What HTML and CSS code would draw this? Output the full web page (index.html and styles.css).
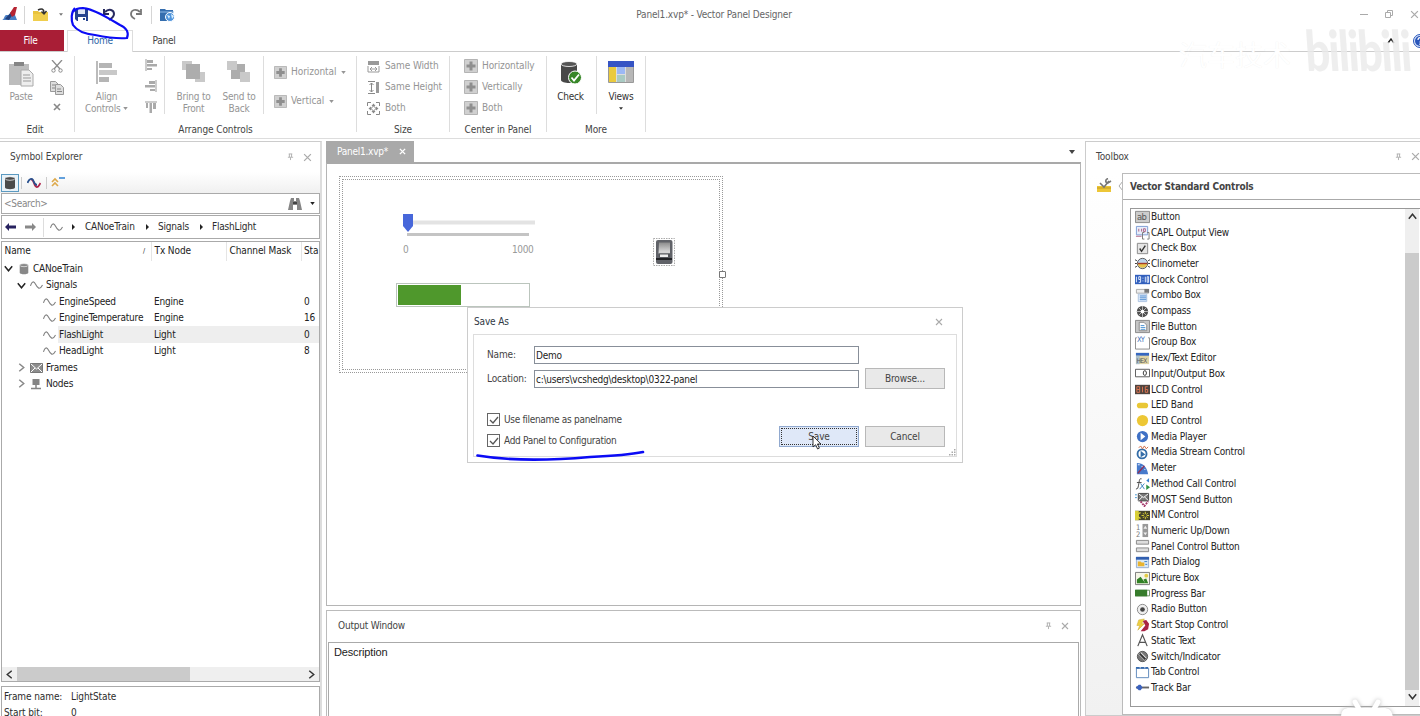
FILE: index.html
```html
<!DOCTYPE html>
<html lang="en">
<head>
<meta charset="utf-8">
<title>Panel1.xvp* - Vector Panel Designer</title>
<link rel="stylesheet" href="styles.css">
</head>
<body>
<svg class="defs" aria-hidden="true">
  <symbol id="wave" viewBox="0 0 14 10"><path d="M.5 6C2 1 4 .2 6 4.200S10.500 11 13.500 5" fill="none" stroke="#808080" stroke-width="1.200"/></symbol>
  <symbol id="db" viewBox="0 0 12 14"><path d="M1 2.500v9c0 2.300 10 2.300 10 0v-9z" fill="currentColor"/><ellipse cx="6" cy="2.500" rx="5" ry="1.800" fill="currentColor" stroke="#fff" stroke-width=".7"/></symbol>
  <symbol id="pin" viewBox="0 0 8 8"><path d="M2 .5h4M2.700.5v3.500M5.200.5v3.500M1 4.300h6M4 4.500v3" fill="none" stroke="#aaa" stroke-width="1"/></symbol>
  <symbol id="x" viewBox="0 0 8 8"><path d="M1 1l6 6M7 1l-6 6" fill="none" stroke="currentColor" stroke-width="1.100"/></symbol>
  <symbol id="down" viewBox="0 0 8 8"><path d="M.7 2l3.300 4 3.300-4" fill="none" stroke="currentColor" stroke-width="1.300"/></symbol>
  <symbol id="tri" viewBox="0 0 6 4"><path d="M0 0h6L3 4z" fill="currentColor"/></symbol>
  <symbol id="plusbox" viewBox="0 0 14 14"><path d="M.5.5h13v13H.5z" fill="#d0d0d0" stroke="#b4b4b4"/><path d="M7 2.500v9M2.500 7h9" stroke="#8f8f8f" stroke-width="3"/></symbol>
  <symbol id="aleft" viewBox="0 0 12 12"><path d="M1 0v12" stroke="#999"/><path d="M2 1h6v3H2zM2 5h10v2.500H2zM2 9h5v2H2z" fill="#aaa"/></symbol>
</svg>
<div class="app">
  <header class="titlebar">
    <div class="quick">
      <svg class="q1" width="16" height="15" viewBox="0 0 16 15"><path d="M0 13c2 0 2-4 4-5h9l2 5z" fill="#4a7fc4"/><path d="M3 12l6-7 2 2-4 6z" fill="#203f7c"/><path d="M8 6l4-6h3l-2 8-3 2z" fill="#b62432"/></svg>
      <i class="vsep"></i>
      <svg class="q2" width="16" height="14" viewBox="0 0 16 14"><path d="M0 3h5l1 1h9v9H0z" fill="#e9c33e"/><path d="M0 6h10l2-2h3v9H0z" fill="#f0ce4d"/><path d="M5 2c4-2 6-1 6 3M8.500 3.500L11 6l2.500-3" fill="none" stroke="#333" stroke-width="1.500"/></svg>
      <svg class="q3" width="4" height="3"><use href="#tri"/></svg>
      <svg class="q4" width="14" height="14" viewBox="0 0 14 14"><path d="M0 1h13v12H2l-2-2z" fill="#25438f"/><path d="M3 1h7v5H3z" fill="#dfe6f5"/><path d="M3 9h8v4H3z" fill="#fff"/><path d="M8 10h2v2H8z" fill="#25438f"/></svg>
      <svg class="q5" width="13" height="13" viewBox="0 0 13 13"><path d="M2 4C6 0 11 2 11 6c0 3-2 4-5 6M1 1v5h5" fill="none" stroke="#282b60" stroke-width="2"/></svg>
      <svg class="q6" width="12" height="13" viewBox="0 0 12 13"><path d="M10 4C6 0 1 2 1 6c0 3 2 4 4 5M11 1v5H6" fill="none" stroke="#777" stroke-width="1.800"/></svg>
      <i class="vsep"></i>
      <svg class="q7" width="15" height="14" viewBox="0 0 15 14"><path d="M0 1h5l1 1h7v11H0z" fill="#346dae"/><path d="M0 4h14" stroke="#8fbbe6"/><circle cx="10" cy="9" r="4.500" fill="#4f94dc" stroke="#fff"/><path d="M7 7l3 1-1 3M11 6l3 2-2 3" fill="#d9efff"/></svg>
    </div>
    <div class="apptitle">Panel1.xvp* - Vector Panel Designer</div>
    <div class="winbtns">
      <svg width="8" height="8" viewBox="0 0 8 8"><path d="M0 4.500h8" stroke="#aaa"/></svg>
      <svg width="8" height="8" viewBox="0 0 8 8"><path d="M.5 2.500h5v5h-5zM2.500 2V.5h5v5H6" fill="none" stroke="#aaa"/></svg>
      <svg class="gray" width="9" height="9"><use href="#x"/></svg>
    </div>
  </header>
  <nav class="tabs">
    <span class="tab file">File</span><span class="tab home">Home</span><span class="tab plain">Panel</span>
    <span class="help"><svg width="8" height="6" viewBox="0 0 8 6"><path d="M1 5l3-4 3 4" fill="none" stroke="#222" stroke-width="1.400"/></svg><svg width="14" height="14" viewBox="0 0 14 14"><circle cx="7" cy="7" r="6.500" fill="#dbe6fa" stroke="#2855ba"/><circle cx="7" cy="7" r="5" fill="#2855ba"/><path d="M5 6c0-3 4-3 4-.5C9 7 7 7 7 8.500M7 9.500V11" fill="none" stroke="#fff" stroke-width="1.200"/></svg></span>
  </nav>
  <section class="ribbon">
    <div class="group edit">
      <div class="body">
        <div class="big paste"><svg width="26" height="26" viewBox="0 0 26 26"><path d="M0 3h20v21H0z" fill="#bdbdbd"/><path d="M5 1h10v4H5z" fill="#858585"/><path d="M12 9h8l4 4v12H12z" fill="#eee" stroke="#aaa"/><path d="M14 14h7M14 17h8M14 20h8" stroke="#999"/></svg><span>Paste</span></div>
        <div class="stack">
          <svg width="12" height="13" viewBox="0 0 12 13"><path d="M1 0l8 9M11 0L3 9" stroke="#8c8c8c" stroke-width="1.300"/><circle cx="2.500" cy="10.500" r="1.700" fill="none" stroke="#8c8c8c"/><circle cx="9.500" cy="10.500" r="1.700" fill="none" stroke="#8c8c8c"/></svg>
          <svg width="14" height="14" viewBox="0 0 14 14"><path d="M.5.5h5l3 3v7h-8z" fill="#ddd" stroke="#999"/><path d="M5.500 3.500h5l3 3v7h-8z" fill="#ddd" stroke="#999"/><path d="M2 4h3M2 7h3M7 8h4M7 10.500h5" stroke="#888"/></svg>
          <svg width="8" height="8" viewBox="0 0 8 8"><path d="M1 1l6 6M7 1L1 7" stroke="#888" stroke-width="1.600"/></svg>
        </div>
      </div><div class="label">Edit</div>
    </div>
    <div class="group arrange">
      <div class="body">
        <div class="big align"><svg width="22" height="24" viewBox="0 0 22 24"><path d="M1 0v23" stroke="#a5a5a5" stroke-width="1.500"/><path d="M3 2h13v5H3zM3 16h10v5H3z" fill="#b5b5b5"/><path d="M3 9h18v5H3z" fill="#c8c8c8"/></svg><span>Align<br>Controls <svg class="mid" width="5" height="3"><use href="#tri"/></svg></span></div>
        <div class="stack">
          <svg width="12" height="12"><use href="#aleft"/></svg>
          <svg class="flip" width="12" height="12"><use href="#aleft"/></svg>
          <svg class="turn" width="12" height="12"><use href="#aleft"/></svg>
        </div>
        <i class="rule"></i>
        <div class="big bring"><svg width="24" height="22" viewBox="0 0 24 22"><path d="M0 0h10v9H0zM13 11h10v10H13z" fill="#c9c9c9"/><path d="M4 3h14v15H4z" fill="#adadad"/></svg><span>Bring to<br>Front</span></div>
        <div class="big send"><svg width="24" height="22" viewBox="0 0 24 22"><path d="M4 3h14v15H4z" fill="#adadad"/><path d="M0 0h10v9H0zM13 11h10v10H13z" fill="#c9c9c9"/></svg><span>Send to<br>Back</span></div>
        <i class="rule"></i>
        <div class="two"><div><svg width="13" height="13"><use href="#plusbox"/></svg>Horizontal <svg width="5" height="3"><use href="#tri"/></svg></div><div><svg width="13" height="13"><use href="#plusbox"/></svg>Vertical <svg width="5" height="3"><use href="#tri"/></svg></div></div>
      </div><div class="label">Arrange Controls</div>
    </div>
    <div class="group size">
      <div class="body three">
        <div><svg width="13" height="13" viewBox="0 0 13 13"><path d="M1 1h11v4H1z" fill="#999"/><path d="M1 6v6h11V6M3 9h7M5 7L3 9l2 2M8 7l2 2-2 2" fill="none" stroke="#999"/></svg>Same Width</div>
        <div><svg width="13" height="13" viewBox="0 0 13 13"><path d="M9 1h3v11H9z" fill="#999"/><path d="M1 .5h7M1 12.500h7M4.500 2v9M2.500 4l2-2 2 2M2.500 9l2 2 2-2" fill="none" stroke="#888"/></svg>Same Height</div>
        <div><svg width="13" height="13" viewBox="0 0 13 13"><path d="M.5 4V.5H4M9 .5h3.500V4M12.500 9v3.500H9M4 12.500H.5V9" fill="none" stroke="#888"/><path d="M6.500 1.500l2 2.500h-4zM6.500 11.500l2-2.500h-4zM1.500 6.500L4 4.500v4zM11.500 6.500L9 4.500v4z" fill="#888"/><circle cx="6.500" cy="6.500" r="2" fill="none" stroke="#999"/></svg>Both</div>
      </div><div class="label">Size</div>
    </div>
    <div class="group center">
      <div class="body three">
        <div><svg width="14" height="14"><use href="#plusbox"/></svg>Horizontally</div>
        <div><svg width="14" height="14"><use href="#plusbox"/></svg>Vertically</div>
        <div><svg width="14" height="14"><use href="#plusbox"/></svg>Both</div>
      </div><div class="label">Center in Panel</div>
    </div>
    <div class="group more">
      <div class="body">
        <div class="big check"><svg width="22" height="24" viewBox="0 0 22 24"><path d="M1 3v16c0 4 16 4 16 0V3z" fill="#484848"/><ellipse cx="9" cy="3" rx="8" ry="2.500" fill="#555" stroke="#fff" stroke-width=".8"/><circle cx="15" cy="16.500" r="6.500" fill="#388729" stroke="#fff"/><path d="M11.500 16.500l2.500 3 5-6" fill="none" stroke="#fff" stroke-width="1.800"/></svg><span>Check</span></div>
        <i class="rule"></i>
        <div class="big views"><svg width="26" height="22" viewBox="0 0 26 22"><path d="M.5.500h25v21H.5z" fill="#ddd" stroke="#999"/><path d="M0 0h26v6H0z" fill="#3654c4"/><path d="M1 6h7v15H1z" fill="#eaca3e"/><path d="M9 6h8v7H9z" fill="#9cb8f5"/><path d="M9 14h8v7H9z" fill="#a9cac3"/><path d="M18 6h7v15h-7z" fill="#b7b7b7"/></svg><span>Views</span><svg width="4" height="3"><use href="#tri"/></svg></div>
      </div><div class="label">More</div>
    </div>
  </section>

  <main class="work">
    <aside class="explorer">
      <div class="phead"><span>Symbol Explorer</span><svg width="7" height="8"><use href="#pin"/></svg><svg class="gray" width="9" height="9"><use href="#x"/></svg></div>
      <div class="toolbar">
        <span class="sel"><svg width="12" height="14"><use href="#db"/></svg></span><i></i>
        <svg width="14" height="12" viewBox="0 0 14 12"><path d="M4 3c3-2 3 8 6 7 2 0 2-2 3.500-4" fill="none" stroke="#b0224a" stroke-width="1.800"/><path d="M.5 6C2 2 5 0 6.500 4S9 8 10 8" fill="none" stroke="#28508e" stroke-width="1.800"/></svg><i></i>
        <svg width="14" height="12" viewBox="0 0 14 12"><path d="M1 5l3-3 3 3M1 9l3-3 3 3" fill="none" stroke="#dda94b" stroke-width="1.600"/><path d="M8 1h6" stroke="#3d8ad5" stroke-width="1.600"/></svg>
      </div>
      <div class="box search"><span>&lt;Search&gt;</span><svg width="14" height="14" viewBox="0 0 14 14"><path d="M2 4l1-3h3v3h2V1h3l1 3 2 9H9V8H5v5H0z" fill="#858585"/><path d="M5 6h4" stroke="#444" stroke-width="2"/></svg><svg width="5" height="3"><use href="#tri"/></svg></div>
      <div class="box path">
        <svg class="navy" width="11" height="8" viewBox="0 0 11 8"><path d="M0 4l4-4v2.500h7v3H4V8z" fill="#27225f"/></svg>
        <svg class="fwd" width="11" height="8" viewBox="0 0 11 8"><path d="M11 4L7 0v2.500H0v3h7V8z" fill="#888"/></svg><i></i>
        <svg class="pw" width="13" height="10"><use href="#wave"/></svg><b class="ar a1"></b><span class="p1">CANoeTrain</span><b class="ar"></b><span class="p2">Signals</span><b class="ar"></b><span class="p3">FlashLight</span>
      </div>
      <div class="box tree">
        <div class="cols"><span>Name<em>/</em></span><span>Tx Node</span><span>Channel Mask</span><span>Sta</span></div>
        <div class="row l0"><span><svg width="9" height="9"><use href="#down"/></svg><svg class="ic g" width="12" height="12"><use href="#db"/></svg>CANoeTrain</span></div>
        <div class="row l1"><span><svg width="9" height="9"><use href="#down"/></svg><svg class="ic" width="13" height="10"><use href="#wave"/></svg>Signals</span></div>
        <div class="row l2"><span><svg class="ic" width="13" height="10"><use href="#wave"/></svg>EngineSpeed</span><span>Engine</span><span></span><span>0</span></div>
        <div class="row l2"><span><svg class="ic" width="13" height="10"><use href="#wave"/></svg>EngineTemperature</span><span>Engine</span><span></span><span>16</span></div>
        <div class="row l2 on"><span><svg class="ic" width="13" height="10"><use href="#wave"/></svg>FlashLight</span><span>Light</span><span></span><span>0</span></div>
        <div class="row l2"><span><svg class="ic" width="13" height="10"><use href="#wave"/></svg>HeadLight</span><span>Light</span><span></span><span>8</span></div>
        <div class="row l1"><span><svg class="cl" width="9" height="9"><use href="#down"/></svg><svg class="ic" width="13" height="10" viewBox="0 0 13 10"><path d="M.5.500h12v9H.500z" fill="#8d8d8d" stroke="#777"/><path d="M1 1l5.500 5L12 1M1 9l4-4M12 9L8 5" fill="none" stroke="#fff"/></svg>Frames</span></div>
        <div class="row l1"><span><svg class="cl" width="9" height="9"><use href="#down"/></svg><svg class="ic n" width="12" height="12" viewBox="0 0 12 12"><path d="M2.500 1h7v6h-7z" fill="#858585"/><path d="M6 7v4M1 10.500h10" stroke="#858585" stroke-width="1.500"/></svg>Nodes</span></div>
        <div class="fill"></div>
        <div class="hscroll"><svg class="lt" width="9" height="9"><use href="#down"/></svg><i></i><svg class="cl" width="9" height="9"><use href="#down"/></svg></div>
      </div>
      <div class="box info"><span>Frame name:</span><span>LightState</span><span>Start bit:</span><span>0</span></div>
    </aside>

    <section class="middle">
      <div class="doctabs"><span>Panel1.xvp*<svg width="7" height="7" viewBox="0 0 8 8"><path d="M1 1l6 6M7 1L1 7" stroke="#fff" stroke-width="1.600"/></svg></span><svg width="6" height="4"><use href="#tri"/></svg></div>
      <div class="canvas">
        <div class="panel">
          <svg class="slider" width="132" height="46" viewBox="0 0 132 46"><path d="M8 6.500h124v4H8z" fill="#e3e3e3"/><path d="M4 19h122v3H4z" fill="#c4c4c4"/><path d="M0 0h10v12l-5 6-5-6z" fill="#4767da"/></svg>
          <span class="min">0</span><span class="max">1000</span>
          <div class="progress"><i></i></div>
          <svg class="switch" width="22" height="28" viewBox="0 0 22 28"><defs><linearGradient id="sw" x2="0" y2="1"><stop stop-color="#8c8c8c"/><stop offset=".8" stop-color="#d4d4d4"/></linearGradient></defs><path d="M.5.500h21v27H.5z" fill="#fff" stroke="#aaa" stroke-dasharray="1.500 1"/><rect x="3" y="2" width="16.500" height="24" rx="2" fill="#606268"/><path d="M6 4.500h11v11H5.500z" fill="url(#sw)"/><path d="M6 15.500h11v5H6z" fill="#54565b"/><path d="M3 20h16v2H3z" fill="#202124"/><path d="M7 16.500h8v2.500H7z" fill="#eee"/></svg>
          <i class="handle"></i>
        </div>
      </div>
      <div class="output"><div class="phead"><span>Output Window</span><svg width="7" height="8"><use href="#pin"/></svg><svg class="gray" width="8" height="8"><use href="#x"/></svg></div><div class="desc">Description</div></div>
    </section>

    <aside class="toolbox">
      <div class="phead"><span>Toolbox</span><svg width="7" height="8"><use href="#pin"/></svg><svg class="gray" width="9" height="9"><use href="#x"/></svg></div>
      <div class="tbody">
        <div class="strip"><svg width="15" height="15" viewBox="0 0 15 15"><path d="M0 8h14v6H0z" fill="#edc637"/><path d="M0 10h14" stroke="#c29b20"/><path d="M3 5l4 4 5-6" fill="none" stroke="#777" stroke-width="1.600"/><path d="M11 .500c-3 1-3 4 0 4.500l3-2" fill="none" stroke="#777" stroke-width="1.600"/></svg><svg width="5" height="10" viewBox="0 0 5 10"><path d="M5 0L1 5l4 5" fill="#fff" stroke="#aaa"/></svg></div>
        <div class="tmain">
          <h2>Vector Standard Controls</h2>
          <div class="listbox">
            <ul>
              <li><svg viewBox="0 0 16 16"><path d="M.5 2.500h15v12H.5z" fill="#ccc" stroke="#888"/><text x="2" y="12" font-size="10" fill="#555">ab</text></svg>Button</li>
              <li><svg viewBox="0 0 16 16"><path d="M1.500 1.500h12v9h-12z" fill="#e8eefb" stroke="#7c9bd2"/><path d="M4 4v3M7 4v3M9 4h2v3H9zM1 12h6" fill="none" stroke="#ad6183"/><path d="M10 8H8v7h2M13 8h2v7h-2" fill="none" stroke="#777"/></svg>CAPL Output View</li>
              <li><svg viewBox="0 0 16 16"><path d="M2.500 2.500h11v11h-11z" fill="#e5e5e5" stroke="#888"/><path d="M5 8l2 3 4-6" fill="none" stroke="#333" stroke-width="1.500"/></svg>Check Box</li>
              <li><svg viewBox="0 0 16 16"><circle cx="8" cy="8" r="5.500" fill="#bcd4ec" stroke="#555"/><path d="M3 8h10c0 6-10 6-10 0" fill="#e7c24b"/><path d="M3 8h10" stroke="#a43d2a" stroke-width="1.500"/><path d="M0 8h2M14 8h2M0 4l2 1M16 4l-2 1M0 12l2-1M16 12l-2-1" stroke="#333"/></svg>Clinometer</li>
              <li><svg viewBox="0 0 16 16"><path d="M0 3h16v10H0z" fill="#315fbd"/><path d="M1.500 5v6M4 5h2v3H4V5M6 8v3H4M8.500 6v1M8.500 9v1M11 5v6M13 5h1.500v6H13z" fill="none" stroke="#e7f0ff"/></svg>Clock Control</li>
              <li><svg viewBox="0 0 16 16"><path d="M1.500 1.500h13v4h-13z" fill="#eee" stroke="#aaa"/><path d="M10 1h5v4h-5z" fill="#777"/><path d="M3.500 6.500h9v8h-9z" fill="#eef5ff" stroke="#aac2e0"/><path d="M5 8.500h7M5 10.500h7M5 12.500h7" stroke="#3c80ca"/></svg>Combo Box</li>
              <li><svg viewBox="0 0 16 16"><circle cx="8" cy="8" r="6" fill="#4e4e4e"/><path d="M8 2v12M2 8h12M4 4l8 8M12 4l-8 8" stroke="#bbb"/><circle cx="8" cy="8" r="2" fill="#fff"/></svg>Compass</li>
              <li><svg viewBox="0 0 16 16"><path d="M.5 1.500h15v13H.5z" fill="#c6c6c6" stroke="#888"/><path d="M4.500 3.500h5l3 3v6h-8z" fill="#fff" stroke="#888"/><path d="M6 7h4M6 9h5M6 11h5" stroke="#4a91d2"/></svg>File Button</li>
              <li><svg viewBox="0 0 16 16"><path d="M2 3H.5v12h15V3H14" fill="none" stroke="#888"/><text x="2" y="7" font-size="8" fill="#3e72bb">XY</text></svg>Group Box</li>
              <li><svg viewBox="0 0 16 16"><path d="M1 2h14v12H1z" fill="#dfd3a4"/><path d="M1 2h14v3H1z" fill="#3768c1"/><path d="M1 5h4v9H1z" fill="#aabfca"/><text x="1.500" y="13" font-size="7" fill="#575757">HEX</text></svg>Hex/Text Editor</li>
              <li><svg viewBox="0 0 16 16"><path d="M.5 3.500h15v8H.5z" fill="#fff" stroke="#555"/><ellipse cx="10.500" cy="7.500" rx="1.700" ry="2.500" fill="none" stroke="#333"/></svg>Input/Output Box</li>
              <li><svg viewBox="0 0 16 16"><path d="M0 3h16v10H0z" fill="#4f4540"/><path d="M2 5h3v6H2V5M2 8h3M8 5v6M13.500 5H11v6h2.500V8H11" fill="none" stroke="#df7551"/></svg>LCD Control</li>
              <li><svg viewBox="0 0 16 16"><rect x="2" y="5" width="12" height="6" rx="3" fill="#e9c735"/></svg>LED Band</li>
              <li><svg viewBox="0 0 16 16"><circle cx="8" cy="8" r="6" fill="#edc735"/></svg>LED Control</li>
              <li><svg viewBox="0 0 16 16"><circle cx="8" cy="8" r="6" fill="#3e70c5"/><path d="M6 4l5 4-5 4z" fill="#fff"/></svg>Media Player</li>
              <li><svg viewBox="0 0 16 16"><circle cx="7.500" cy="9.500" r="4.800" fill="#fff" stroke="#346da8" stroke-width="2"/><path d="M6 6l5 4-5 3z" fill="#346da8"/><path d="M4 3l2-2 2 3 2-3 2 3 2-2" fill="none" stroke="#d06b43"/></svg>Media Stream Control</li>
              <li><svg viewBox="0 0 16 16"><path d="M2 2c7 0 11 5 12 12H2z" fill="#477acb"/><path d="M3 13l7-8" stroke="#8e3159" stroke-width="1.500"/><path d="M3 4h2M7 6h1M10 9h1" stroke="#fff"/></svg>Meter</li>
              <li><svg viewBox="0 0 16 16"><path d="M7 3C4 2 5 6 3 13L1 14M2 7h5" fill="none" stroke="#444"/><path d="M6 8l4 6M10 8l-5 6" fill="none" stroke="#3983c2"/><path d="M12 9l4 3-4 3z" fill="#2e9347"/><path d="M15 2v5l-3-2z" fill="#3983d2"/></svg>Method Call Control</li>
              <li><svg viewBox="0 0 16 16"><path d="M3.500 1.500h11v8h-11z" fill="#777" stroke="#444"/><path d="M4 2l5 4 5-4M4 9l4-4M14 9l-4-4" fill="none" stroke="#fff"/><path d="M0 3h2M0 6h2" stroke="#3b93d4"/><path d="M6 10l4 5 4-5" fill="none" stroke="#a3386b" stroke-width="2" stroke-dasharray="2 1"/></svg>MOST Send Button</li>
              <li><svg viewBox="0 0 16 16"><path d="M0 3h16v10H0z" fill="#45442c"/><path d="M0 3h4v10H0z" fill="#d9cf37"/><path d="M6 5C2 6 2 10 6 11" fill="none" stroke="#d9cf37" stroke-width="1.500"/><path d="M11 4v8M7 8h8M8.500 5.500l5 5M13.500 5.500l-5 5" stroke="#e2d534"/><circle cx="11" cy="8" r="1.500" fill="#45442c"/></svg>NM Control</li>
              <li><svg viewBox="0 0 16 16"><text x="1" y="7" font-size="8" fill="#777">1</text><text x="1" y="15" font-size="8" fill="#777">2</text><path d="M8 1h6v14H8z" fill="#999"/><path d="M9 6l2-3 2 3zM9 10l2 3 2-3z" fill="#eee"/></svg>Numeric Up/Down</li>
              <li><svg viewBox="0 0 16 16"><path d="M1.500 1.500h13v4h-13zM1.500 9.500h13v4h-13z" fill="#ddd" stroke="#888"/></svg>Panel Control Button</li>
              <li><svg viewBox="0 0 16 16"><path d="M1.500 2.500h13v11h-13z" fill="#d8e8f8" stroke="#94add0"/><path d="M1 2h14v3H1z" fill="#315fb0"/><path d="M3 7h3l1 1h3v4H3z" fill="#e9b431"/><path d="M10 7h3M11 10h2" stroke="#397fc4"/></svg>Path Dialog</li>
              <li><svg viewBox="0 0 16 16"><path d="M.5 1.500h15v13H.5z" fill="#f5f5e6" stroke="#777"/><path d="M2 13V9l4-3 5 7zM9 9l3-1 2 5h-3z" fill="#318125"/><circle cx="12" cy="5" r="2" fill="#e4cb43"/></svg>Picture Box</li>
              <li><svg viewBox="0 0 16 16"><path d="M.5 4.500h15v6H.5z" fill="#fff" stroke="#6b8f65"/><path d="M0 4h13v7H0z" fill="#377c2c"/></svg>Progress Bar</li>
              <li><svg viewBox="0 0 16 16"><circle cx="8" cy="8" r="5.500" fill="#eee" stroke="#888"/><circle cx="8" cy="8" r="2.500" fill="#444"/></svg>Radio Button</li>
              <li><svg viewBox="0 0 16 16"><path d="M8 3l4-1 3 4-1 6-4 2H6l5-6z" fill="#a92444"/><path d="M4 2l6-1-3 5h3l-7 7 2-5H2z" fill="#edcf40" stroke="#c8a62d" stroke-width=".5"/></svg>Start Stop Control</li>
              <li><svg viewBox="0 0 16 16"><path d="M3 14L8 2l5 12M5 10h6" fill="none" stroke="#555" stroke-width="1.300"/></svg>Static Text</li>
              <li><svg viewBox="0 0 16 16"><circle cx="8" cy="8" r="5.500" fill="#777" stroke="#555"/><path d="M4 5l7 7M6 4l6 6" stroke="#ddd" stroke-width="1.500"/><path d="M5 5l6 6" stroke="#333" stroke-width="2"/></svg>Switch/Indicator</li>
              <li><svg viewBox="0 0 16 16"><path d="M1.500 3.500h13v10h-13z" fill="#fff" stroke="#5d88bb"/><path d="M1 2h4v2H1zM6 2h4v2H6zM11 2h3v2h-3z" fill="#366baf"/></svg>Tab Control</li>
              <li><svg viewBox="0 0 16 16"><path d="M1 8h14" stroke="#666" stroke-width="2"/><path d="M4 5h2l2 3-2 3H4L1 8z" fill="#3a61bd"/></svg>Track Bar</li>
            </ul>
            <div class="vscroll"><svg class="up" width="9" height="9"><use href="#down"/></svg><i></i><svg width="9" height="9"><use href="#down"/></svg></div>
          </div>
        </div>
      </div>
    </aside>
  </main>

  <section class="dialog">
    <div class="dhead"><span>Save As</span><svg class="gray" width="8" height="8"><use href="#x"/></svg></div>
    <div class="dbody">
      <div class="form"><label>Name:</label><div class="input">Demo</div><label>Location:</label><div class="input">c:\users\vcshedg\desktop\0322-panel</div><div class="btn">Browse...</div></div>
      <div class="lower">
        <div class="checks"><div><i><svg width="10" height="10" viewBox="0 0 10 10"><path d="M1 5l3 3 5-6" fill="none" stroke="#555" stroke-width="1.300"/></svg></i>Use filename as panelname</div><div><i><svg width="10" height="10" viewBox="0 0 10 10"><path d="M1 5l3 3 5-6" fill="none" stroke="#555" stroke-width="1.300"/></svg></i>Add Panel to Configuration</div></div>
        <div class="btn save"><span>Save</span></div><div class="btn">Cancel</div>
      </div>
      <svg class="grip" width="7" height="7" viewBox="0 0 7 7"><path d="M5 0h1.500v1.500H5zM5 2.500h1.500V4H5zM5 5h1.500v1.500H5zM2.500 2.500H4V4H2.500zM2.500 5H4v1.500H2.500zM0 5h1.500v1.500H0z" fill="#aaa"/></svg>
    </div>
  </section>

  <div class="wm-name">汽车技术</div>
  <div class="wm-logo">bilibili</div>
  <svg class="wm-tv" width="56" height="20" viewBox="0 0 56 20"><path d="M15 4l4 7M38 4l-4 7" stroke="#fff" stroke-width="5" stroke-linecap="round"/><path d="M1 20c0-8 3-10 9-10h33c6 0 9 2 10 10z" fill="#fff"/></svg>
  <svg class="ink" width="1420" height="716" viewBox="0 0 1420 716"><path d="M75 8C71 12 71 20 73 25c4 6 12 9 22 10 10 2 22 4 32 3 2-5 0-10-7-13C108 18 94 9 83 8c-4 0-8 1-10 4" fill="none" stroke="#0b0bf5" stroke-width="2.200"/><path d="M477.500 455.500C510 461 555 460 590 457c22-1 38-2 53-5" fill="none" stroke="#0b0bf5" stroke-width="2.600" stroke-linecap="round"/><path d="M813 436v11l2.600-2.300 2 4.300 1.800-.9-2-4.100h3.500z" fill="#fff" stroke="#222" stroke-width=".9"/></svg>
</div>
</body>
</html>
```
FILE: styles.css
```css
* { box-sizing: border-box; }
body { margin: 0; background: #fff; }
.defs { position: absolute; width: 0; height: 0; }
svg { flex: none; }
i, em { font-style: normal; }
.app {
  position: relative; width: 1420px; height: 716px; overflow: hidden;
  display: flex; flex-direction: column; background: #fff; color: #2c2c2c;
  font: 10px/12px "DejaVu Sans Condensed", "DejaVu Sans", sans-serif;
  font-stretch: condensed; letter-spacing: -.27px; white-space: nowrap;
}
.gray { color: #aaa; }

/* Title bar */
.titlebar { height: 30px; flex: none; display: grid; grid-template-columns: 600px 1fr 592px; align-items: center; padding-bottom: 1px; }
.quick { display: flex; align-items: center; padding-left: 2px; }
.vsep { width: 1px; height: 18px; background: #d5d5d5; }
.q1 { margin-right: 6px; }
.q2 { margin-left: 8px; }
.q3 { margin: 0 12px 0 10px; color: #777; }
.q5 { margin-left: 14px; }
.q6 { margin: 0 9px 0 14px; }
.q7 { margin-left: 8px; }
.apptitle { text-align: center; color: #666; letter-spacing: -.17px; }
.winbtns { display: flex; justify-content: flex-end; gap: 17px; padding-right: 1px; }

/* Ribbon tabs */
.tabs { height: 22px; flex: none; display: flex; border-bottom: 1px solid #ccc; }
.tab { display: flex; align-items: center; justify-content: center; height: 21px; }
.file { width: 64px; background: #a91e36; color: #fff; padding-right: 3px; }
.home { width: 66px; height: 22px; margin-left: 3px; background: #fff; border: 1px solid #ddd; border-bottom: 0; color: #2d67a7; padding-bottom: 2px; }
.plain { width: 62px; color: #444; }
.help { margin-left: auto; display: flex; align-items: center; gap: 18px; width: 33px; }

/* Ribbon */
.ribbon { height: 87px; flex: none; display: flex; padding-top: 4px; border-bottom: 1px solid #ddd; }
.group { height: 76px; border-right: 1px solid #ddd; display: flex; flex-direction: column; }
.body { height: 67px; flex: 1; display: flex; color: #959595; letter-spacing: -.2px; }
.label { height: 12px; text-align: center; margin-bottom: -4px; letter-spacing: -.1px; color: #444; }
.edit { width: 75px; }
.arrange { width: 282px; }
.size { width: 93px; }
.center { width: 97px; }
.more { width: 99px; color: #333; }
.edit .label { padding-right: 4px; }
.big { display: flex; flex-direction: column; align-items: center; text-align: center; padding-top: 5px; }
.big > span { margin-top: 5px; }
.paste { width: 42px; }
.paste > svg { margin-left: 2px; }
.paste > span { margin-top: 4px; }
.stack { display: flex; flex-direction: column; align-items: center; gap: 8px; padding-top: 4px; }
.edit .stack { width: 30px; }
.align { width: 63px; }
.arrange .stack { width: 26px; gap: 9px; padding-top: 3px; }
.flip { transform: scaleX(-1); }
.turn { transform: rotate(90deg); }
.mid { vertical-align: 2px; }
.rule { width: 1px; height: 58px; background: #ddd; }
.bring { width: 55px; padding-left: 2px; }
.send { width: 38px; margin-right: 5px; }
.bring > span, .send > span { margin-top: 8px; }
.align > span { margin-top: 6px; }
.two { display: flex; flex-direction: column; gap: 17px; padding: 10px 0 0 10px; letter-spacing: -.05px; }
.two div, .three div { display: flex; align-items: center; gap: 4px; height: 12px; }
.two div svg:last-child { margin-left: 1px; }
.three { flex-direction: column; gap: 9px; padding: 4px 0 0 10px; letter-spacing: -.1px; }
.size .three div { gap: 5px; }
.center .three { padding-left: 14px; }
.more .body { color: #333; }
.check { width: 49px; padding-right: 2px; }
.check > span { margin-top: 6px; }
.views { width: 48px; }
.views > span { margin-top: 8px; }
.views > svg { margin-left: -1px; }
.views > svg:last-child { margin-top: 4px; }

/* Docked work area */
.work { flex: 1; min-height: 0; display: grid; grid-template-columns: 322px 755px 336px; gap: 4px; padding-top: 2px; background: #fff; }
.phead { height: 30px; display: flex; align-items: center; color: #444; letter-spacing: -.1px; }
.phead span { flex: 1; }
.phead svg + svg { margin-left: 9px; }
.box { border: 1px solid #aaa; background: #fff; width: 319px; margin-left: 1px; }
.explorer { min-height: 0; border-top: 1px solid #ccc; border-right: 2px solid #ddd; display: flex; flex-direction: column; overflow: hidden; }
.explorer .phead { padding: 0 8px 0 10px; flex: none; }
.toolbar { height: 21px; flex: none; display: flex; align-items: center; gap: 5px; padding-left: 1px; background: linear-gradient(#fff, #f0f0f0); }
.sel { width: 18px; height: 18px; border: 1px solid #5b9ac1; background: #e9f2f8; display: flex; align-items: center; justify-content: center; margin-right: -3px; color: #4a4a4a; }
.toolbar i { width: 1px; height: 12px; background: #ccc; }
.toolbar i:nth-of-type(2) { margin-right: -1px; }
.search { height: 21px; flex: none; display: flex; align-items: center; color: #888; padding: 0 4px 0 2px; }
.search span { flex: 1; letter-spacing: -.3px; }
.search svg + svg { margin-left: 8px; color: #222; }
.path { height: 24px; flex: none; margin-top: 1px; display: flex; align-items: center; padding-left: 3px; }
.fwd { margin: 0 7px 0 9px; }
.path i { width: 1px; height: 19px; background: #ddd; }
.pw { margin-left: 6px; }
.ar { border: 3px solid transparent; border-left: 3px solid #222; border-right: 0; margin: 0 9px; }
.a1 { margin: 0 10px 0 9px; }
.p1 { width: 52px; } .p2 { width: 33px; }
.p1, .p2, .p3 { letter-spacing: -.2px; }
.tree { height: 441px; flex: none; margin-top: 2px; display: flex; flex-direction: column; color: #222; }
.cols { height: 18.700px; display: grid; grid-template-columns: 150px 75px 75px 1fr; line-height: 18px; letter-spacing: -.1px; }
.cols span { overflow: hidden; padding-left: 2.500px; border-right: 1px solid #e5e5e5; }
.cols span:last-child { border: 0; padding-left: 2px; }
.cols em { float: right; padding-right: 6px; font-size: 7px; }
.row { height: 16.450px; flex: none; display: grid; grid-template-columns: 152px 75px 75px 1fr; align-items: center; letter-spacing: -.2px; }
.row > span { display: flex; align-items: center; }
.row > span:first-child svg { margin-right: 4px; }
.l0 > span:first-child { padding-left: 2px; }
.l1 > span:first-child { padding-left: 15px; }
.l2 > span:first-child { padding-left: 41px; }
.row > span:first-child .ic { margin-right: 3px; }
.ic.g { color: #888; margin-left: 1px; }
.row > span:first-child .n { margin-right: 4px; }
.on { background: linear-gradient(90deg, #fff 56px, #eee 56px); }
.cl { transform: rotate(-90deg); color: #888; }
.lt { transform: rotate(90deg); }
.fill { flex: 1; }
.hscroll { height: 14px; display: flex; align-items: center; justify-content: space-between; background: #efefef; padding: 0 3px; color: #333; }
.hscroll i { width: 173px; height: 14px; background: #cbcbcb; margin-right: auto; margin-left: 3px; }
.hscroll .cl { color: #333; }
.info { flex: none; height: 60px; margin-top: 4px; display: grid; grid-template-columns: 67px 1fr; align-content: start; row-gap: 4px; padding: 4px 2px; letter-spacing: -.1px; }

.middle { min-height: 0; display: flex; flex-direction: column; }
.doctabs { height: 21px; display: flex; align-items: center; justify-content: space-between; padding-right: 6px; color: #444; }
.doctabs span { width: 88px; height: 21px; display: flex; align-items: center; gap: 11px; padding-left: 11px; color: #fff; background: #a9a9a9; letter-spacing: -.25px; }
.canvas { position: relative; height: 444px; border: 1px solid #b5b5b5; border-top: 2px solid #a9a9a9; }
.panel { position: absolute; left: 12px; top: 12px; width: 384px; height: 197px; border: 1px dotted #999; }
.panel::before { content: ""; position: absolute; inset: 2px; border: 1px dotted #999; }
.slider { position: absolute; left: 63px; top: 37px; }
.min, .max { position: absolute; top: 67px; color: #999; letter-spacing: -.35px; }
.min { left: 63px; } .max { left: 172px; }
.progress { position: absolute; left: 56px; top: 106px; width: 134px; height: 24px; border: 1px solid #bbc5bd; padding: 1px; }
.progress i { display: block; width: 63px; height: 20px; background: #4f982c; }
.switch { position: absolute; left: 313px; top: 61px; }
.handle { position: absolute; right: -4px; top: 94px; width: 7px; height: 7px; border: 1px solid #777; border-radius: 1px; background: #fff; }
.output { flex: 1; margin-top: 4px; border: 1px solid #bbb; border-bottom: 0; padding: 0 1px; display: flex; flex-direction: column; }
.output .phead { height: 31px; padding: 0 10px 2px 10px; flex: none; letter-spacing: -.35px; letter-spacing: -.2px; }
.desc { flex: 1; border: 1px solid #aaa; border-bottom: 0; padding: 2px 5px; font: 11px/14px "Liberation Sans", sans-serif; letter-spacing: -.15px; color: #222; }

.toolbox { min-height: 0; border: 1px solid #ccc; border-right: 0; display: flex; flex-direction: column; width: 336px; }
.toolbox .phead { padding: 0 1px 2px 10px; height: 31px; flex: none; }
.tbody { height: 542px; display: grid; grid-template-columns: 36px 1fr; }
.strip { display: flex; align-items: flex-start; justify-content: space-between; padding: 5px 0 0 11px; background: linear-gradient(#fff, #f1f1f1); }
.strip svg + svg { margin: 3px -1px 0 0; }
.tmain { border: 1px solid #bbb; border-right: 0; }
h2 { margin: 0; height: 26px; padding: 7px 0 0 7px; border-bottom: 1px solid #aaa; font: bold 10px/12px "DejaVu Sans Condensed", "DejaVu Sans", sans-serif; font-stretch: condensed; letter-spacing: -.2px; color: #444; }
.listbox { height: 499px; margin: 8px 0 0 7px; border: 1px solid #999; border-right: 0; display: grid; grid-template-columns: 1fr 15px; }
ul { list-style: none; margin: 0; padding: 0 0 0 4px; color: #222; letter-spacing: -.2px; }
li { height: 15.716px; display: flex; align-items: center; gap: 1px; }
li svg { width: 15px; height: 15px; }
li text { font-family: "DejaVu Sans Condensed", "DejaVu Sans", sans-serif; letter-spacing: -.7px; }
.vscroll { width: 14px; margin-left: -1px; background: #efefef; display: flex; flex-direction: column; align-items: center; color: #333; padding: 3px 0 5px; }
.vscroll i { width: 14px; flex: 1; margin: 32px 0 2px; background: #cbcbcb; }
.up { transform: rotate(180deg); }

/* Save As dialog */
.dialog { position: absolute; left: 467px; top: 307px; width: 496px; height: 156px; border: 1px solid #ccc; background: #fff; padding: 0 5px; color: #444; letter-spacing: -.3px; }
.dhead { height: 26px; display: flex; align-items: center; justify-content: space-between; padding: 1px 14px 0 1px; color: #303945; letter-spacing: -.15px; }
.dbody { position: relative; height: 123px; border: 1px solid #ddd; padding: 11px 11px 0 13px; }
.form { display: grid; grid-template-columns: 47px 325px 80px; row-gap: 4px; align-items: center; letter-spacing: -.15px; }
.form label { grid-column: 1; }
.form .btn { margin-left: 6px; margin-right: -6px; }
.input { height: 18px; border: 1px solid #888f99; padding-left: 1px; line-height: 17px; color: #222; letter-spacing: -.22px; }
.btn { width: 80px; height: 21px; border: 1px solid #b8b8b8; background: #e9e9e9; display: flex; align-items: center; justify-content: center; letter-spacing: -.15px; }
.lower { display: flex; align-items: flex-end; gap: 6px; margin-top: 24px; height: 34px; }
.checks { flex: 1; display: flex; flex-direction: column; gap: 8px; margin-bottom: 1px; transform: translateY(1px); }
.checks div { display: flex; align-items: center; gap: 4px; height: 13px; }
.lower .btn { margin-bottom: 0; }
.checks i { width: 13px; height: 13px; border: 1px solid #666; display: flex; align-items: center; justify-content: center; }
.save { border: 1px solid #91a9cf; background: #dfe8f8; padding: 1px; }
.save span { flex: 1; height: 17px; border: 1px dotted #333; text-align: center; line-height: 16px; }
.grip { position: absolute; right: 0; bottom: 0; }

/* Overlays */
.wm-name { position: absolute; left: 1179px; top: 38px; font: 28px/32px "Noto Sans CJK SC", sans-serif; color: #fff; letter-spacing: 0; text-shadow: 0 0 1px #eee; }
.wm-logo { position: absolute; left: 1305px; top: 21px; font: 900 56px/58px Lato, sans-serif; color: #ebebeb; opacity: .8; letter-spacing: -2px; transform: skewX(4deg) scaleX(.78); transform-origin: left center; }
.wm-tv { position: absolute; left: 1340px; top: 698px; filter: drop-shadow(0 0 2px #bbb); }
.ink { position: absolute; left: 0; top: 0; pointer-events: none; }
```
